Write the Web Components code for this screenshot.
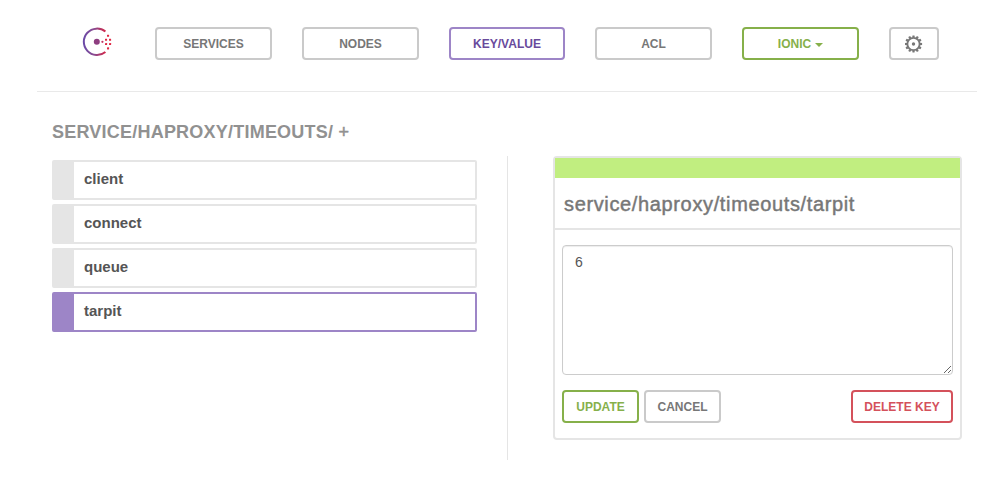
<!DOCTYPE html>
<html lang="en">
<head>
<meta charset="utf-8">
<title>Consul</title>
<style>
body{margin:0;background:#fff;font-family:"Liberation Sans",Arial,sans-serif;color:#555}
</style>
</head>
<body>
<consul-app></consul-app>
<script>
const define = (name, css, html, init) => {
  const t = document.createElement('template');
  t.innerHTML = `<style>*{box-sizing:border-box}${css}</style>${html}`;
  customElements.define(name, class extends HTMLElement {
    constructor() {
      super();
      this.attachShadow({mode: 'open'}).append(t.content.cloneNode(true));
    }
    connectedCallback() { if (init) init(this); }
  });
};

define('c-button', `
:host{display:block;height:33px;box-sizing:border-box;border:2px solid #cacaca;border-radius:4px;color:#777;
font-size:12px;font-weight:700;line-height:30px;text-align:center;white-space:nowrap}
:host([tone=purple]){border-color:#9d85c7;color:#694a9c}
:host([tone=green]){border-color:#86b04a;color:#86b04a}
:host([tone=red]){border-color:#d4515b;color:#d4515b}
`, `<slot></slot>`);

define('c-caret', `
:host{display:inline-block;width:8px;height:4px;margin-left:4px;vertical-align:1px}
svg{display:block}
`, `<svg width="8" height="4" viewBox="0 0 8 4"><path d="M0 0H8L4 4Z" fill="currentColor"/></svg>`);

define('c-gear', `
:host{display:block;width:18px;height:18px;margin:6px auto 0}
svg{display:block}
`, `<svg width="18" height="18" viewBox="-8.5 -9 18 18" fill="#777"><g id="teeth"></g><circle r="6.1" fill="none" stroke="#777" stroke-width="1.8"/><circle r="1.7"/></svg>`,
el => {
  const g = el.shadowRoot.querySelector('#teeth');
  for (let i = 0; i < 12; i++) {
    const p = document.createElementNS('http://www.w3.org/2000/svg', 'path');
    p.setAttribute('d', 'M-1.3 -6.5L-1 -8.6H1L1.3 -6.5Z');
    p.setAttribute('transform', `rotate(${i * 30})`);
    g.append(p);
  }
});

define('c-logo', `
:host{display:block;width:30px;height:30px}
svg{display:block}
`, `<svg width="30" height="30" viewBox="0 0 30 30">
<defs><linearGradient id="g" gradientUnits="userSpaceOnUse" x1="1" y1="0" x2="24" y2="0"><stop offset="0" stop-color="#694aa9"/><stop offset=".5" stop-color="#8b4a8e"/><stop offset="1" stop-color="#d62545"/></linearGradient></defs>
<path d="M23.4 4.6A13.2 13.2 0 1 0 23.4 25" fill="none" stroke="url(#g)" stroke-width="2"/>
<circle cx="14.8" cy="14.8" r="3" fill="#8e3d80"/>
<g fill="#df2846"><circle cx="20.4" cy="14.8" r="1.1" fill="#c23463"/><rect x="23" y="11.7" width="2.1" height="2.1" rx=".4"/><rect x="23" y="16" width="2.1" height="2.1" rx=".4"/><rect x="27" y="11.7" width="2.1" height="2.1" rx=".4"/><rect x="27" y="16" width="2.1" height="2.1" rx=".4"/><rect x="25" y="7.7" width="2.1" height="2.1" rx=".4"/><rect x="25" y="20.3" width="2.1" height="2.1" rx=".4"/></g></svg>`);

define('c-nav', `
:host{display:block;box-sizing:border-box;margin:0 20px 0 37px;height:92px;border-bottom:1px solid #e9e9e9;padding:27px 38px 0 45px}
nav{display:grid;grid-template-columns:43px 117px 117px 116px 117px 117px 50px;column-gap:30px}
`, `<nav><c-logo></c-logo><c-button>SERVICES</c-button><c-button>NODES</c-button><c-button tone="purple">KEY/VALUE</c-button><c-button>ACL</c-button><c-button tone="green">IONIC<c-caret></c-caret></c-button><c-button><c-gear></c-gear></c-button></nav>`);

define('c-item', `
:host{display:block;height:40px;box-sizing:border-box;border:2px solid #e5e5e5;border-left-width:22px;border-radius:2px;
padding-left:10px;font-size:15px;line-height:34px;font-weight:700;color:#555}
:host([active]){border-color:#9d85c7}
`, `<slot></slot>`);

define('c-key-list', `
:host{display:block;width:425px}
h4{margin:0;height:68px;padding-top:29px;font-size:18px;line-height:22px;letter-spacing:.22px;color:#919191;white-space:nowrap}
.plus{font-weight:400;-webkit-text-stroke:.5px #919191}
div{display:grid;gap:4px}
`, `<h4>SERVICE/HAPROXY/TIMEOUTS/ <span class="plus">+</span></h4>
<div><c-item>client</c-item><c-item>connect</c-item><c-item>queue</c-item><c-item active>tarpit</c-item></div>`);

define('c-editor', `
:host{display:block;width:409px;height:284px;margin:64px 0 0 45px;box-sizing:border-box;border:2px solid #e5e5e5;border-radius:4px}
.bar{height:20px;background:#c1ee80}
h3{margin:0;height:52px;border-bottom:2px solid #e5e5e5;padding-left:9px;font-weight:400;font-size:20px;line-height:52px;letter-spacing:.64px;color:#777;-webkit-text-stroke:.45px #777;white-space:nowrap}
.body{padding:15px 7px 0}
textarea{display:block;width:391px;height:130px;margin:0;padding:6px 12px;border:1px solid #ccc;border-radius:4px;box-shadow:inset 0 1px 1px rgba(0,0,0,.075);font:14px/20px "Liberation Sans",Arial,sans-serif;color:#555;resize:vertical;outline:0}
.row{display:flex;gap:5px;margin-top:15px}
.row c-button{width:77px}
.row .del{width:102px;margin-left:auto}
`, `<div class="bar"></div><h3>service/haproxy/timeouts/tarpit</h3><div class="body"><textarea>6</textarea>
<div class="row"><c-button tone="green">UPDATE</c-button><c-button>CANCEL</c-button><c-button class="del" tone="red">DELETE KEY</c-button></div></div>`);

define('c-divider', `:host{display:block;width:1px;height:304px;margin:64px 0 0 30px;background:#e5e5e5}`, ``);

define('consul-app', `
:host{display:block}
main{display:flex;align-items:flex-start;padding-left:52px}
`, `<c-nav></c-nav><main><c-key-list></c-key-list><c-divider></c-divider><c-editor></c-editor></main>`);
</script>
</body>
</html>
